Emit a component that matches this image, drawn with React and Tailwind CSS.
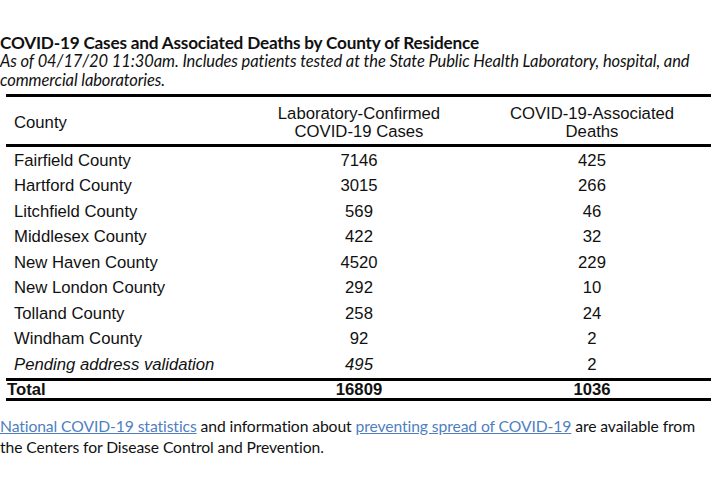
const rows = [
  { county: "Fairfield County", cases: "7146", deaths: "425" },
  { county: "Hartford County", cases: "3015", deaths: "266" },
  { county: "Litchfield County", cases: "569", deaths: "46" },
  { county: "Middlesex County", cases: "422", deaths: "32" },
  { county: "New Haven County", cases: "4520", deaths: "229" },
  { county: "New London County", cases: "292", deaths: "10" },
  { county: "Tolland County", cases: "258", deaths: "24" },
  { county: "Windham County", cases: "92", deaths: "2" },
  { county: "Pending address validation", cases: "495", deaths: "2", italic: true },
];

export default function App() {
  return (
    <div className="w-[720px] h-[480px] bg-white overflow-hidden text-[#111] pt-[34px]">
      {/* Heading */}
      <div className="font-['Lato',sans-serif]">
        <h1 className="text-[17.2px] leading-[18px] font-bold tracking-[-0.2px]">
          COVID-19 Cases and Associated Deaths by County of Residence
        </h1>
        <p className="text-[16.5px] leading-[19px] italic tracking-[-0.1px] whitespace-nowrap">
          As of 04/17/20 11:30am. Includes patients tested at the State Public Health Laboratory, hospital, and
          <br />
          commercial laboratories.
        </p>
      </div>

      {/* Table */}
      <div className="ml-[6px] w-[705px] mt-[4px] font-['Liberation_Sans',Arial,sans-serif] text-[16.7px]">
        <div className="grid grid-cols-[239px_228px_238px] h-[53px] items-center border-t-[3px] border-b-[3px] border-black leading-[18px] pt-[4px]">
          <div className="pl-[8px]">County</div>
          <div className="text-center">
            Laboratory-Confirmed
            <br />
            COVID-19 Cases
          </div>
          <div className="text-center">
            COVID-19-Associated
            <br />
            Deaths
          </div>
        </div>
        <div className="pt-[1px]">
          {rows.map((r) => (
            <div
              key={r.county}
              className="grid grid-cols-[239px_228px_238px] h-[25.5px] items-center leading-[18px]"
            >
              <div className={`pl-[8px] ${r.italic ? "italic" : ""}`}>{r.county}</div>
              <div className={`text-center ${r.italic ? "italic" : ""}`}>{r.cases}</div>
              <div className="text-center">{r.deaths}</div>
            </div>
          ))}
        </div>
        <div className="grid grid-cols-[239px_228px_238px] h-[23px] items-center border-t-[3px] border-b-[3px] border-black font-bold leading-[17px]">
          <div className="pl-[1px]">Total</div>
          <div className="text-center">16809</div>
          <div className="text-center">1036</div>
        </div>
      </div>

      {/* Footer note */}
      <p className="mt-[15px] font-['Lato',sans-serif] text-[15.7px] leading-[21px] tracking-[-0.1px] whitespace-nowrap">
        <a className="text-[#4f7fc2] underline">National COVID-19 statistics</a> and information about{" "}
        <a className="text-[#4f7fc2] underline">preventing spread of COVID-19</a> are available from
        <br />
        the Centers for Disease Control and Prevention.
      </p>
    </div>
  );
}
